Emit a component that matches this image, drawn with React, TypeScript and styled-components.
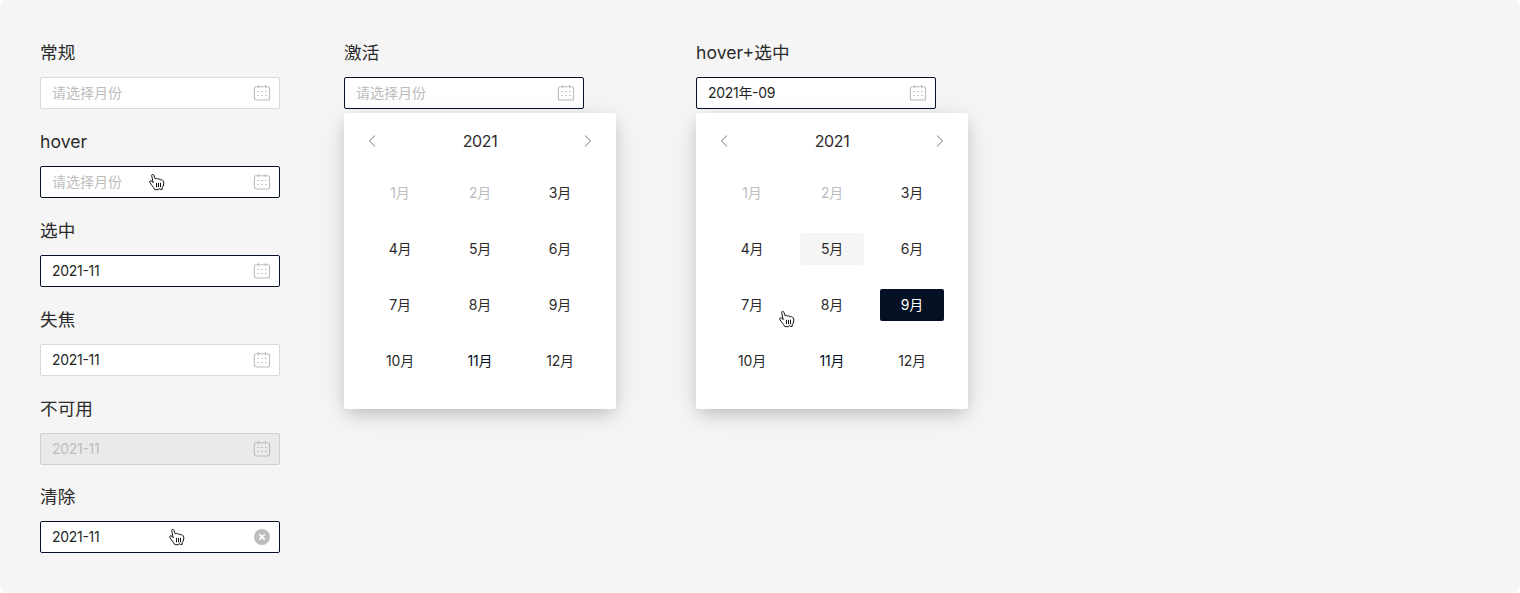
import React from "react";
import styled, { createGlobalStyle, css } from "styled-components";

const GlobalStyle = createGlobalStyle`
  * { box-sizing: border-box; }
  body { margin: 0; background: #fff; }
`;

const Page = styled.main`
  display: flex;
  align-items: flex-start;
  width: 1520px;
  height: 593px;
  padding: 40px;
  border-radius: 8px;
  background: #f5f5f5;
  color: #2b2b2b;
  font-family: Inter, "Noto Sans CJK SC", sans-serif;
  font-feature-settings: "case";
`;

const Column = styled.section<{ $width: number; $gap: number }>`
  display: flex;
  flex-direction: column;
  gap: 20px;
  width: ${(p) => p.$width}px;
  margin-right: ${(p) => p.$gap}px;
`;

const Example = styled.div<{ $tight?: boolean }>`
  display: flex;
  flex-direction: column;
  margin-top: ${(p) => (p.$tight ? -1 : 0)}px;
`;

const Label = styled.h2`
  height: 25px;
  margin: 0 0 12px;
  font-size: 17.6px;
  font-weight: 400;
  line-height: 26px;
  letter-spacing: 0.05px;
  white-space: nowrap;
`;

type FieldState = "normal" | "active" | "disabled";

const fieldStates = {
  normal: css`
    border-color: #d9d9d9;
    background: #fff;
  `,
  active: css`
    border-color: #051024;
    background: #fff;
  `,
  disabled: css`
    border-color: #d0d0d0;
    background: #eaeaea;
  `,
};

const Field = styled.div<{ $state: FieldState }>`
  position: relative;
  display: flex;
  align-items: center;
  justify-content: space-between;
  width: 240px;
  height: 32px;
  padding: 0 8px 0 11px;
  border: 1px solid;
  border-radius: 2px;
  ${(p) => fieldStates[p.$state]}
`;

const Value = styled.span<{ $muted?: boolean; $spacing?: number }>`
  padding-bottom: 1px;
  font-size: 14px;
  line-height: 22px;
  letter-spacing: ${(p) => p.$spacing ?? 0}px;
  color: ${(p) => (p.$muted ? "#bdbdbd" : "#262626")};
`;

const Pointer = styled.svg<{ $x: number; $y: number }>`
  position: absolute;
  left: ${(p) => p.$x}px;
  top: ${(p) => p.$y}px;
`;

const Popup = styled.div`
  position: relative;
  width: 272px;
  height: 296px;
  margin-top: 4px;
  padding: 0 24px;
  border-radius: 2px;
  background: #fff;
  box-shadow: 0 6px 16px -4px rgba(0, 0, 0, 0.19), 0 6px 28px rgba(0, 0, 0, 0.1);
`;

const PopupHeader = styled.header`
  display: flex;
  align-items: center;
  justify-content: space-between;
  height: 64px;
  padding: 0 0 8px;
`;

const Year = styled.span`
  font-size: 16px;
  line-height: 24px;
  letter-spacing: -0.4px;
`;

const Months = styled.div`
  display: grid;
  grid-template-columns: repeat(3, 64px);
  grid-auto-rows: 32px;
  gap: 24px 16px;
`;

type MonthState = "default" | "disabled" | "current" | "hover" | "selected";

const monthStates = {
  default: css``,
  disabled: css`
    color: #bdbdbd;
  `,
  current: css`
    color: #051024;
  `,
  hover: css`
    background: #f5f5f5;
  `,
  selected: css`
    background: #051024;
    color: #fff;
  `,
};

const Month = styled.div<{ $state: MonthState }>`
  display: flex;
  align-items: center;
  justify-content: center;
  padding-bottom: 1px;
  border-radius: 2px;
  font-size: 14px;
  line-height: 22px;
  letter-spacing: -0.2px;
  ${(p) => monthStates[p.$state]}
`;

const CalendarIcon = () => (
  <svg width="18" height="18" viewBox="0 0 18 18" fill="none" stroke="#bdbdbd">
    <rect x="1.4" y="2.8" width="15.2" height="13.2" rx="2" strokeWidth="1.1" />
    <path d="M5.5 1v3.2M12.5 1v3.2" />
    <path
      d="M4.3 7.5h1.6M8.2 7.5h1.6M12.1 7.5h1.6M4.3 11.5h1.6M8.2 11.5h1.6M12.1 11.5h1.6"
      strokeWidth="1.2"
    />
  </svg>
);

const ClearIcon = () => (
  <svg width="18" height="18" viewBox="0 0 18 18">
    <circle cx="9" cy="9" r="8" fill="#bdbdbd" />
    <path d="M6.3 6.3l5.4 5.4M11.7 6.3l-5.4 5.4" stroke="#fff" strokeWidth="1.7" />
  </svg>
);

const Chevron = ({ next }: { next?: boolean }) => (
  <svg width="8" height="12" viewBox="0 0 8 12" fill="none" stroke="#757575">
    <path d={next ? "M1 0.5 6.6 6 1 11.5" : "M7 0.5 1.4 6 7 11.5"} />
  </svg>
);

const HandPointer = ({ x, y }: { x: number; y: number }) => (
  <Pointer $x={x} $y={y} width="16" height="17" viewBox="0 0.5 16 17">
    <path
      d="M5.5 15.9 4.6 14 2.4 11.3.7 8.6C.4 7.4 1.8 6.8 2.8 7.7L4.2 9.2 3.1 4.2 2.7 1.9C2.6.8 4.4.7 4.9 1.7L6.3 5.6C6.8 4.5 8.3 4.6 8.7 5.8 9.4 4.9 10.8 5.2 11.2 6.5 12 5.8 13.3 6.1 14.1 7.2L14.9 9.4 14.2 12.6 13.2 14.2V15.9H11.2L10.2 15 9.3 16.2H6.8Z"
      fill="#fff"
      stroke="#111"
      strokeWidth="1"
      strokeLinejoin="round"
    />
    <path d="M7.5 9.4v4.3M9.5 9.4v4.3M11.5 9.4v4.3" stroke="#111" strokeWidth="1" />
  </Pointer>
);

interface ExampleProps {
  label: string;
  value?: string;
  state?: FieldState;
  pointerX?: number;
  clearable?: boolean;
  tight?: boolean;
  spacing?: number;
  children?: React.ReactNode;
}

const PickerExample = ({
  label,
  value,
  state = "normal",
  pointerX,
  clearable,
  tight,
  spacing = -0.3,
  children,
}: ExampleProps) => (
  <Example $tight={tight}>
    <Label>{label}</Label>
    <Field $state={state}>
      <Value $muted={!value || state === "disabled"} $spacing={value ? spacing : 0}>
        {value ?? "请选择月份"}
      </Value>
      {clearable ? <ClearIcon /> : <CalendarIcon />}
      {pointerX !== undefined && <HandPointer x={pointerX} y={7} />}
    </Field>
    {children}
  </Example>
);

const MonthPanel = ({
  states,
  children,
}: {
  states?: Record<number, MonthState>;
  children?: React.ReactNode;
}) => {
  const all: Record<number, MonthState> = { 1: "disabled", 2: "disabled", 11: "current", ...states };
  return (
    <Popup>
      <PopupHeader>
        <Chevron />
        <Year>2021</Year>
        <Chevron next />
      </PopupHeader>
      <Months>
        {Array.from({ length: 12 }, (_, i) => i + 1).map((m) => (
          <Month key={m} $state={all[m] ?? "default"}>
            {m}月
          </Month>
        ))}
      </Months>
      {children}
    </Popup>
  );
};

export default function App() {
  return (
    <>
      <GlobalStyle />
      <Page>
        <Column $width={240} $gap={64}>
          <PickerExample label="常规" />
          <PickerExample label="hover" state="active" pointerX={108} />
          <PickerExample label="选中" value="2021-11" state="active" />
          <PickerExample label="失焦" value="2021-11" />
          <PickerExample label="不可用" value="2021-11" state="disabled" />
          <PickerExample label="清除" value="2021-11" state="active" pointerX={128} clearable tight />
        </Column>
        <Column $width={272} $gap={80}>
          <PickerExample label="激活" state="active">
            <MonthPanel />
          </PickerExample>
        </Column>
        <Column $width={272} $gap={0}>
          <PickerExample label="hover+选中" value="2021年-09" state="active">
            <MonthPanel states={{ 5: "hover", 9: "selected" }}>
              <HandPointer x={83} y={198} />
            </MonthPanel>
          </PickerExample>
        </Column>
      </Page>
    </>
  );
}
